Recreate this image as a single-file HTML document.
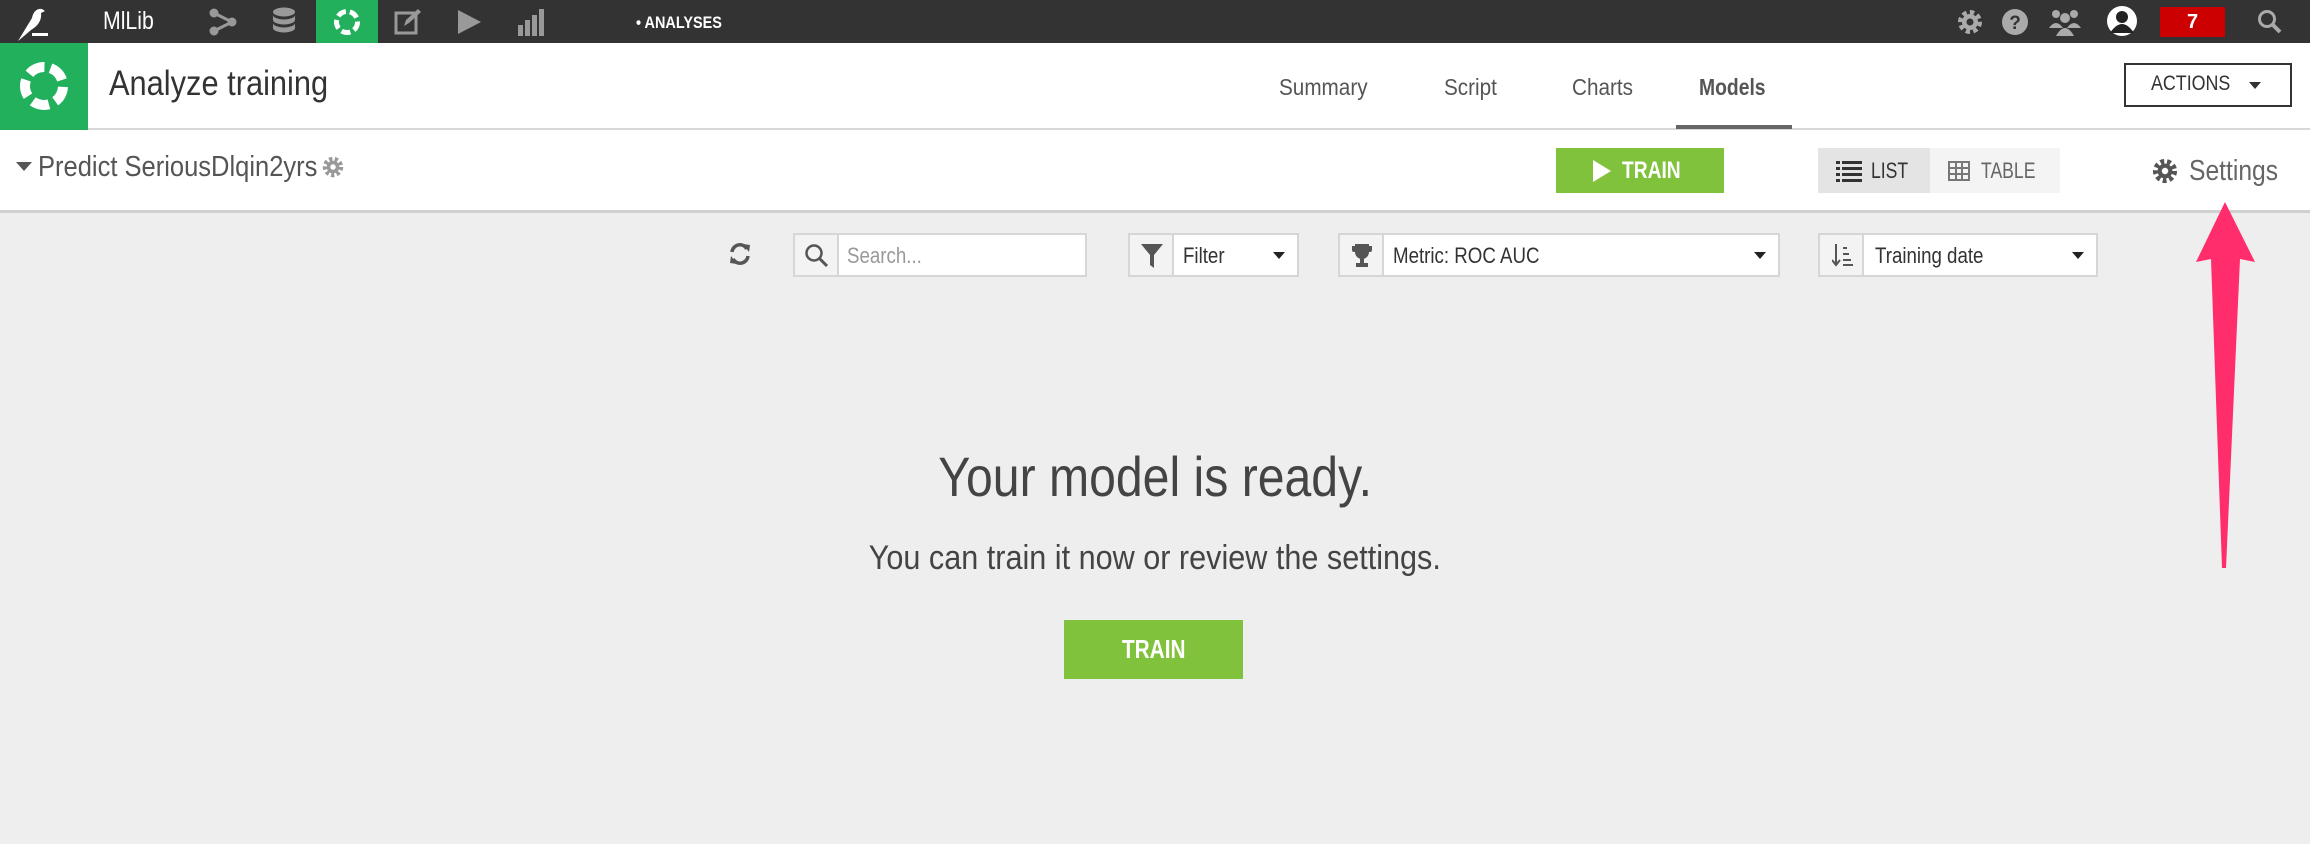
<!DOCTYPE html>
<html><head><meta charset="utf-8"><style>
*{box-sizing:border-box;margin:0;padding:0}
body{width:2310px;height:844px;overflow:hidden;background:#eeeeee;font-family:"Liberation Sans",sans-serif;position:relative;color:#333}
.abs{position:absolute}
.top{left:0;top:0;width:2310px;height:43px;background:#333333}
.hdr{left:0;top:43px;width:2310px;height:87px;background:#fff;border-bottom:2px solid #d8d8d8}
.row2{left:0;top:130px;width:2310px;height:83px;background:#fff;border-bottom:3px solid #d0d0d0}
.nar{display:inline-block;transform-origin:0 50%;white-space:nowrap}
.tab{top:74px;font-size:23px;color:#555}
.box{background:#fff;border:2px solid #d6d6d6;height:44px;top:233px}
.ib{position:absolute;left:0;top:0;width:44px;height:40px;border-right:2px solid #d6d6d6;background:#f3f3f3}
.dd{position:absolute;font-size:22px;color:#333;top:8px}
.car{position:absolute;right:12px;top:17px;width:0;height:0;border-left:6px solid transparent;border-right:6px solid transparent;border-top:7px solid #222}
</style></head><body>
<div class="abs top"></div>
<svg class="abs" style="left:14px;top:4px" width="40" height="38" viewBox="0 0 40 38"><path d="M4 37 L18 14 C19 8 23 4 28 5 L31 7 L27 9 C28 16 24 22 17 26 L10 32 Z" fill="#fff"/><rect x="18" y="29" width="16" height="3" fill="#fff"/></svg>
<div class="abs" style="left:103px;top:7px;font-size:25px;color:#fff"><span class="nar" style="transform:scaleX(.85)">MlLib</span></div>
<svg class="abs" style="left:208px;top:8px" width="30" height="28" viewBox="0 0 30 28"><circle cx="6" cy="5" r="4.5" fill="#999"/><circle cx="6" cy="23" r="4.5" fill="#999"/><circle cx="24" cy="14" r="4.5" fill="#999"/><path d="M6 5 L24 14 L6 23" stroke="#999" stroke-width="3" fill="none"/></svg>
<svg class="abs" style="left:272px;top:7px" width="24" height="30" viewBox="0 0 24 30"><ellipse cx="12" cy="5" rx="11" ry="4.5" fill="#999"/><path d="M1 8 v5 a11 4.5 0 0 0 22 0 v-5 a11 4.5 0 0 1 -22 0z M1 16 v5 a11 4.5 0 0 0 22 0 v-5 a11 4.5 0 0 1 -22 0z" fill="#999"/></svg>
<div class="abs" style="left:316px;top:0;width:62px;height:43px;background:#23b05c"></div>
<svg class="abs" style="left:332px;top:7px" width="30" height="30" viewBox="0 0 30 30"><circle cx="15" cy="15" r="10.5" fill="none" stroke="#fff" stroke-width="5" stroke-dasharray="9 4"/></svg>
<svg class="abs" style="left:394px;top:8px" width="28" height="28" viewBox="0 0 28 28"><rect x="2" y="5" width="20" height="20" fill="none" stroke="#999" stroke-width="3"/><path d="M10 18 L12 12 L24 1 L27 4 L15 15Z" fill="#999"/></svg>
<svg class="abs" style="left:456px;top:9px" width="26" height="26" viewBox="0 0 26 26"><path d="M2 1 L25 13 L2 25Z" fill="#999"/></svg>
<svg class="abs" style="left:518px;top:9px" width="26" height="28" viewBox="0 0 26 28"><rect x="0" y="16" width="5" height="11" fill="#999"/><rect x="7" y="11" width="5" height="16" fill="#999"/><rect x="14" y="6" width="5" height="21" fill="#999"/><rect x="21" y="0" width="5" height="27" fill="#999"/></svg>
<div class="abs" style="left:636px;top:13px;font-size:17px;color:#fff;font-weight:bold"><span class="nar" style="transform:scaleX(.85)">• ANALYSES</span></div>
<svg class="abs" style="left:1956px;top:8px" width="28" height="28" viewBox="0 0 28 28"><circle cx="14" cy="14" r="9" fill="none" stroke="#aaa" stroke-width="6" stroke-dasharray="4 3"/><circle cx="14" cy="14" r="8" fill="#aaa"/><circle cx="14" cy="14" r="3.5" fill="#333"/></svg>
<svg class="abs" style="left:2001px;top:8px" width="28" height="28" viewBox="0 0 28 28"><circle cx="14" cy="14" r="13" fill="#aaa"/><text x="14" y="21" font-size="19" font-weight="bold" text-anchor="middle" fill="#333" font-family="Liberation Sans">?</text></svg>
<svg class="abs" style="left:2048px;top:8px" width="34" height="28" viewBox="0 0 34 28"><circle cx="8" cy="6" r="4" fill="#aaa"/><circle cx="26" cy="6" r="4" fill="#aaa"/><circle cx="17" cy="10" r="5" fill="#aaa"/><path d="M1 20 q7 -10 14 0z M19 20 q7 -10 14 0z M8 28 q9 -16 18 0z" fill="#aaa"/></svg>
<svg class="abs" style="left:2106px;top:5px" width="32" height="32" viewBox="0 0 32 32"><circle cx="16" cy="16" r="15" fill="#fff"/><circle cx="16" cy="12" r="6" fill="#222"/><path d="M4 28 q12 -18 24 0z" fill="#222"/></svg>
<div class="abs" style="left:2160px;top:7px;width:65px;height:30px;background:#cc0000;color:#fff;font-weight:bold;font-size:20px;text-align:center;line-height:30px">7</div>
<svg class="abs" style="left:2257px;top:9px" width="26" height="26" viewBox="0 0 26 26"><circle cx="10" cy="10" r="7.5" fill="none" stroke="#aaa" stroke-width="3"/><path d="M15 15 L23 23" stroke="#aaa" stroke-width="4"/></svg>

<div class="abs hdr"></div>
<div class="abs" style="left:0;top:43px;width:88px;height:87px;background:#23b05c"></div>
<svg class="abs" style="left:16px;top:58px" width="56" height="56" viewBox="0 0 56 56"><circle cx="28" cy="28" r="19" fill="none" stroke="#fff" stroke-width="10" stroke-dasharray="17 7" transform="rotate(-70 28 28)"/></svg>
<div class="abs" style="left:109px;top:64px;font-size:35px;color:#333"><span class="nar" style="transform:scaleX(.88)">Analyze training</span></div>
<div class="abs tab" style="left:1279px"><span class="nar" style="transform:scaleX(.9)">Summary</span></div>
<div class="abs tab" style="left:1444px"><span class="nar" style="transform:scaleX(.9)">Script</span></div>
<div class="abs tab" style="left:1572px"><span class="nar" style="transform:scaleX(.9)">Charts</span></div>
<div class="abs tab" style="left:1699px;font-weight:bold"><span class="nar" style="transform:scaleX(.84)">Models</span></div>
<div class="abs" style="left:1676px;top:125px;width:116px;height:4px;background:#666"></div>
<div class="abs" style="left:2124px;top:63px;width:168px;height:44px;border:2px solid #333;background:#fff"></div>
<div class="abs" style="left:2151px;top:72px;font-size:21px;color:#333"><span class="nar" style="transform:scaleX(.85)">ACTIONS</span></div>
<div class="abs" style="left:2249px;top:82px;border-left:6px solid transparent;border-right:6px solid transparent;border-top:7px solid #333"></div>

<div class="abs row2"></div>
<div class="abs" style="left:16px;top:162px;border-left:8px solid transparent;border-right:8px solid transparent;border-top:9px solid #555"></div>
<div class="abs" style="left:38px;top:151px;font-size:29px;color:#555"><span class="nar" style="transform:scaleX(.88)">Predict SeriousDlqin2yrs</span></div>
<svg class="abs" style="left:322px;top:156px" width="22" height="22" viewBox="0 0 28 28"><circle cx="14" cy="14" r="10" fill="none" stroke="#999" stroke-width="6" stroke-dasharray="4 3"/><circle cx="14" cy="14" r="8" fill="#999"/><circle cx="14" cy="14" r="3.5" fill="#fff"/></svg>
<div class="abs" style="left:1556px;top:148px;width:168px;height:45px;background:#80c23c"></div>
<svg class="abs" style="left:1592px;top:160px" width="20" height="22" viewBox="0 0 20 22"><path d="M1 0 L19 11 L1 22Z" fill="#fff"/></svg>
<div class="abs" style="left:1622px;top:157px;font-size:24px;color:#fff;font-weight:bold"><span class="nar" style="transform:scaleX(.8)">TRAIN</span></div>
<div class="abs" style="left:1818px;top:148px;width:112px;height:45px;background:#e4e4e4"></div>
<div class="abs" style="left:1930px;top:148px;width:130px;height:45px;background:#f4f4f4"></div>
<svg class="abs" style="left:1836px;top:160px" width="26" height="22" viewBox="0 0 26 22"><g fill="#333"><rect x="0" y="1" width="4" height="3"/><rect x="6" y="1" width="20" height="3"/><rect x="0" y="7" width="4" height="3"/><rect x="6" y="7" width="20" height="3"/><rect x="0" y="13" width="4" height="3"/><rect x="6" y="13" width="20" height="3"/><rect x="0" y="19" width="4" height="3"/><rect x="6" y="19" width="20" height="3"/></g></svg>
<div class="abs" style="left:1871px;top:158px;font-size:22px;color:#333"><span class="nar" style="transform:scaleX(.8)">LIST</span></div>
<svg class="abs" style="left:1948px;top:161px" width="22" height="20" viewBox="0 0 22 20"><rect x="1" y="1" width="20" height="18" fill="none" stroke="#777" stroke-width="2"/><path d="M1 7h20M1 13h20M8 1v18M14 1v18" stroke="#777" stroke-width="2"/></svg>
<div class="abs" style="left:1981px;top:158px;font-size:22px;color:#666"><span class="nar" style="transform:scaleX(.8)">TABLE</span></div>
<svg class="abs" style="left:2152px;top:158px" width="26" height="26" viewBox="0 0 28 28"><circle cx="14" cy="14" r="10" fill="none" stroke="#555" stroke-width="6" stroke-dasharray="4 3"/><circle cx="14" cy="14" r="8" fill="#555"/><circle cx="14" cy="14" r="3.5" fill="#fff"/></svg>
<div class="abs" style="left:2189px;top:155px;font-size:29px;color:#666"><span class="nar" style="transform:scaleX(.85)">Settings</span></div>

<svg class="abs" style="left:728px;top:241px" width="24" height="26" viewBox="0 0 24 26"><path d="M4 11 A8 8 0 0 1 19 8 M20 15 A8 8 0 0 1 5 18" fill="none" stroke="#555" stroke-width="3.5"/><path d="M15 3 L22 4 L21 11Z M9 23 L2 22 L3 15Z" fill="#555"/></svg>
<div class="abs box" style="left:793px;width:294px"><div class="ib"><svg style="position:absolute;left:9px;top:8px" width="26" height="26" viewBox="0 0 26 26"><circle cx="10" cy="10" r="7.5" fill="none" stroke="#555" stroke-width="2.5"/><path d="M15 15 L23 23" stroke="#555" stroke-width="3"/></svg></div><div class="dd" style="left:52px;color:#999"><span class="nar" style="transform:scaleX(.85)">Search...</span></div></div>
<div class="abs box" style="left:1128px;width:171px"><div class="ib"><svg style="position:absolute;left:11px;top:9px" width="22" height="24" viewBox="0 0 22 24"><path d="M0 0 H22 L13 11 V24 L9 21 V11Z" fill="#555"/></svg></div><div class="dd" style="left:53px"><span class="nar" style="transform:scaleX(.85)">Filter</span></div><div class="car"></div></div>
<div class="abs box" style="left:1338px;width:442px"><div class="ib"><svg style="position:absolute;left:11px;top:9px" width="22" height="24" viewBox="0 0 22 24"><path d="M4 0 H18 V8 A7 7 0 0 1 4 8Z M1 2 H4 V8 H3 A2 2 0 0 1 1 6Z M21 2 H18 V8 H19 A2 2 0 0 0 21 6Z M9 14 H13 V19 H17 V23 H5 V19 H9Z" fill="#555"/></svg></div><div class="dd" style="left:53px"><span class="nar" style="transform:scaleX(.85)">Metric: ROC AUC</span></div><div class="car"></div></div>
<div class="abs box" style="left:1818px;width:280px"><div class="ib"><svg style="position:absolute;left:12px;top:9px" width="22" height="24" viewBox="0 0 22 24"><path d="M4 0 V20 M0 16 L4 21 L8 16" fill="none" stroke="#555" stroke-width="2"/><path d="M11 4h4M11 10h6M11 16h8M11 21h10" stroke="#555" stroke-width="2"/></svg></div><div class="dd" style="left:55px"><span class="nar" style="transform:scaleX(.85)">Training date</span></div><div class="car"></div></div>

<div class="abs" style="left:0;top:442px;width:2310px;text-align:center;font-size:56px;color:#444;line-height:70px"><span class="nar" style="transform:scaleX(.86);transform-origin:50% 50%">Your model is ready.</span></div>
<div class="abs" style="left:0;top:536px;width:2310px;text-align:center;font-size:34px;color:#444;line-height:44px"><span class="nar" style="transform:scaleX(.9);transform-origin:50% 50%">You can train it now or review the settings.</span></div>
<div class="abs" style="left:1064px;top:620px;width:179px;height:59px;background:#80c23c;color:#fff;font-weight:bold;font-size:26px;text-align:center;line-height:59px"><span class="nar" style="transform:scaleX(.8);transform-origin:50% 50%">TRAIN</span></div>

<svg class="abs" style="left:2180px;top:195px" width="90" height="380" viewBox="2180 195 90 380"><path d="M2225 202 L2255 262 L2240 259 L2226 568 L2222 568 L2211 259 L2196 262 Z" fill="#ff2d6b"/></svg>
</body></html>
